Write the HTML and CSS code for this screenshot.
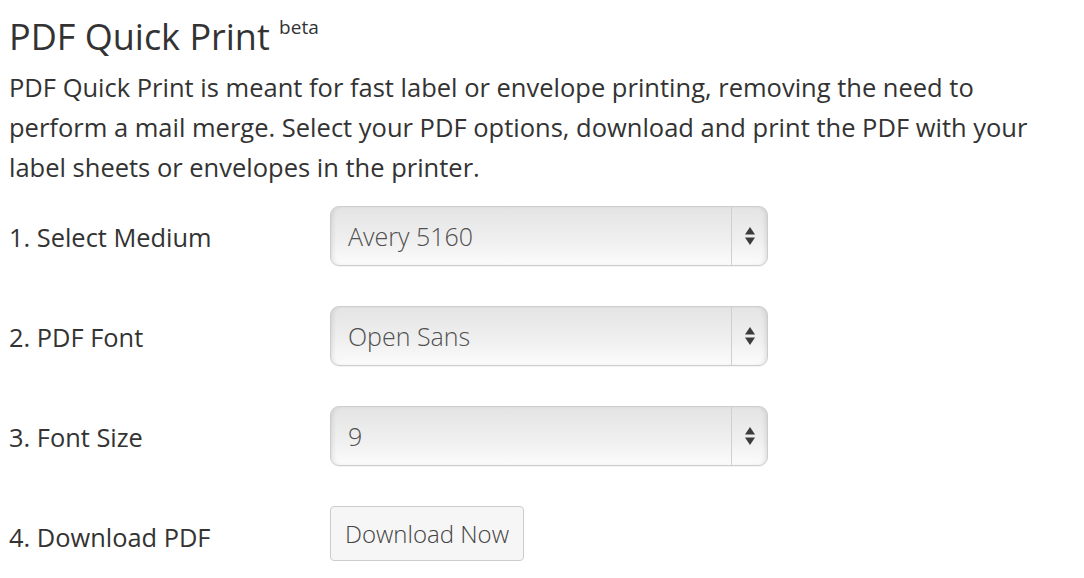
FILE: index.html
```html
<!DOCTYPE html>
<html>
<head>
<meta charset="utf-8">
<link rel="stylesheet" href="styles.css">
</head>
<body>
<div class="page">
  <h1 class="title">PDF Quick Print <sup class="beta">beta</sup></h1>
  <p class="intro">PDF Quick Print is meant for fast label or envelope printing, removing the need to perform a mail merge. Select your PDF options, download and print the PDF with your label sheets or envelopes in the printer.</p>
  <form class="form">
    <div class="row">
      <label class="label">1. Select Medium</label>
      <div class="select">
        <span class="select-value">Avery 5160</span>
        <span class="select-arrows"><svg width="12" height="20" viewBox="0 0 12 20"><path d="M6 1 L11 8.5 L1 8.5 Z" fill="#3c3c3c"/><path d="M1 11.5 L11 11.5 L6 19 Z" fill="#3c3c3c"/></svg></span>
      </div>
    </div>
    <div class="row">
      <label class="label">2. PDF Font</label>
      <div class="select">
        <span class="select-value">Open Sans</span>
        <span class="select-arrows"><svg width="12" height="20" viewBox="0 0 12 20"><path d="M6 1 L11 8.5 L1 8.5 Z" fill="#3c3c3c"/><path d="M1 11.5 L11 11.5 L6 19 Z" fill="#3c3c3c"/></svg></span>
      </div>
    </div>
    <div class="row">
      <label class="label">3. Font Size</label>
      <div class="select">
        <span class="select-value">9</span>
        <span class="select-arrows"><svg width="12" height="20" viewBox="0 0 12 20"><path d="M6 1 L11 8.5 L1 8.5 Z" fill="#3c3c3c"/><path d="M1 11.5 L11 11.5 L6 19 Z" fill="#3c3c3c"/></svg></span>
      </div>
    </div>
    <div class="row">
      <label class="label">4. Download PDF</label>
      <button type="button" class="button">Download Now</button>
    </div>
  </form>
</div>
</body>
</html>
```

FILE: styles.css
```css
html, body {
  margin: 0;
  padding: 0;
  background: #ffffff;
}
body {
  font-family: "Open Sans", "Noto Sans", sans-serif;
  color: #333333;
}
.page {
  padding: 0 0 0 9px;
  width: 1060px;
}
.title {
  margin: 0;
  padding-top: 12px;
  font-size: 36px;
  font-weight: 400;
  line-height: 50px;
  color: #333333;
}
.beta {
  font-size: 19px;
  vertical-align: top;
  position: relative;
  top: 6px;
  line-height: 1;
}
.intro {
  margin: 5px 0 0 0;
  font-size: 25.5px;
  line-height: 40px;
  width: 1040px;
}
.form {
  display: flex;
  flex-direction: column;
}
.row {
  display: grid;
  grid-template-columns: 321px 438px;
  height: 100px;
  align-items: center;
}
.label {
  font-size: 25.4px;
  line-height: 40px;
}
.select {
  position: relative;
  height: 60px;
  margin-bottom: 3px;
  box-sizing: border-box;
  border: 1px solid #cdcdcd;
  border-radius: 9px;
  background: linear-gradient(to bottom, #e4e4e4 0%, #efefef 55%, #fbfbfb 100%);
  box-shadow: inset 4px 0 5px -3px rgba(0,0,0,0.12), inset -4px 0 5px -3px rgba(0,0,0,0.12), 0 1px 1px rgba(0,0,0,0.05);
  display: flex;
  align-items: center;
  padding-left: 17px;
}
.select-value {
  font-size: 25px;
  font-weight: 300;
  color: #505050;
}
.select-arrows {
  position: absolute;
  right: 0;
  top: 0;
  bottom: 0;
  width: 35px;
  border-left: 1px solid #cfcfcf;
  display: flex;
  align-items: center;
  justify-content: center;
}
.button {
  justify-self: start;
  width: 194px;
  height: 55px;
  margin-bottom: 7px;
  box-sizing: border-box;
  border: 1px solid #cccccc;
  border-radius: 4px;
  background: #f6f6f6;
  font-family: "Open Sans", "Noto Sans", sans-serif;
  font-size: 24px;
  font-weight: 300;
  color: #444444;
  padding: 0;
}
```
